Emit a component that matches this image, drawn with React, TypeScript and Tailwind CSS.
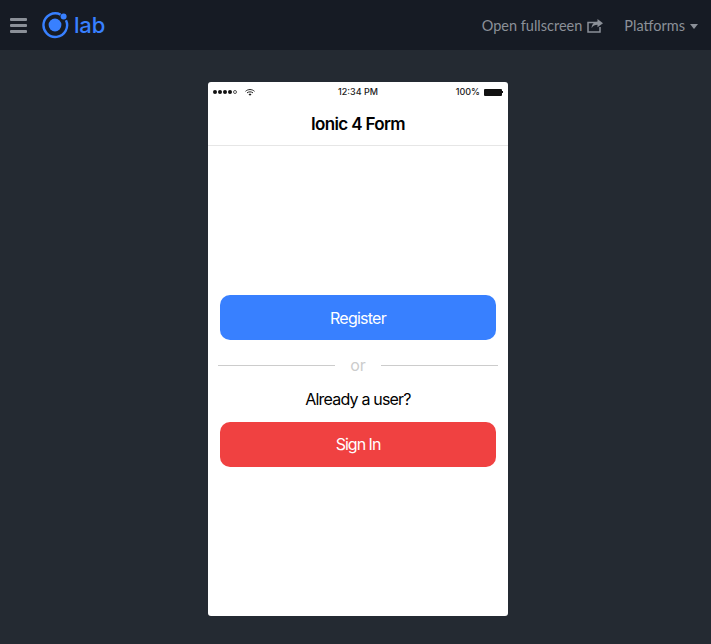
import React from "react";

function Logo() {
  return (
    <svg width="28" height="28" viewBox="0 0 28 28" fill="none">
      <circle cx="14" cy="14" r="6.4" fill="#3880ff" />
      <path d="M19.6 3.6A11.8 11.8 0 1 0 25 9.2" stroke="#3880ff" strokeWidth="2.4" strokeLinecap="butt" />
      <circle cx="22.6" cy="5.4" r="3" fill="#3880ff" />
    </svg>
  );
}

function ShareIcon() {
  return (
    <svg width="16" height="14" viewBox="0 0 16 14" fill="none">
      <path d="M9 3.5H1V13H13V8" stroke="#8b9098" strokeWidth="1.5" />
      <path d="M10.5 0L16 4.2L10.5 8.2V5.8C7.8 5.8 6 6.8 4.6 9.2C4.8 5.6 7 2.9 10.5 2.6Z" fill="#8b9098" />
    </svg>
  );
}

function Wifi() {
  return (
    <svg width="10" height="7" viewBox="0 0 10 7" fill="none">
      <path d="M0.5 2.3C3 0 7 0 9.5 2.3" stroke="#222" strokeWidth="1" />
      <path d="M2 3.9C3.7 2.5 6.3 2.5 8 3.9" stroke="#222" strokeWidth="1" />
      <path d="M3.5 5.2C4.4 4.6 5.6 4.6 6.5 5.2L5 6.8Z" fill="#222" />
    </svg>
  );
}

export default function App() {
  return (
    <div className="flex h-[644px] w-[711px] flex-col overflow-hidden bg-[#242a32] font-['Inter',sans-serif]">
      <header className="flex h-[50px] shrink-0 items-center justify-between bg-[#161b24] pl-[10px] pr-[13px]">
        <div className="flex items-center">
          <div className="flex w-[17px] flex-col gap-[3px]">
            <span className="h-[3px] rounded-[1px] bg-[#8b9098]" />
            <span className="h-[3px] rounded-[1px] bg-[#8b9098]" />
            <span className="h-[3px] rounded-[1px] bg-[#8b9098]" />
          </div>
          <div className="ml-[14px] flex items-center">
            <Logo />
          </div>
          <span className="ml-[5px] text-[22px] leading-none font-medium tracking-[-0.2px] text-[#3880ff]">lab</span>
        </div>
        <div className="flex items-center pt-[1px] font-['Lato',sans-serif] text-[14.5px] text-[#8b9098]">
          <span>Open fullscreen</span>
          <span className="ml-[5px] flex">
            <ShareIcon />
          </span>
          <span className="ml-[21px]">Platforms</span>
          <span className="ml-[5px] mt-[2px] h-0 w-0 border-x-[4.5px] border-t-[5px] border-x-transparent border-t-[#8b9098]" />
        </div>
      </header>
      <main className="flex flex-1 justify-center pt-[32px] pl-[5px]">
        <div className="flex h-[534px] w-[300px] flex-col overflow-hidden rounded-[3px] bg-white">
          <div className="relative flex h-[20px] shrink-0 items-center justify-between px-[5px] text-[9px] font-medium text-[#222]">
            <div className="flex items-center gap-[8px]">
              <div className="flex items-center gap-[1px]">
                <span className="h-[4px] w-[4px] rounded-full bg-[#111]" />
                <span className="h-[4px] w-[4px] rounded-full bg-[#111]" />
                <span className="h-[4px] w-[4px] rounded-full bg-[#111]" />
                <span className="h-[4px] w-[4px] rounded-full bg-[#111]" />
                <span className="h-[4px] w-[4px] rounded-full border-[0.5px] border-[#555]" />
              </div>
              <Wifi />
            </div>
            <span className="absolute left-[130px] top-[3px] leading-[14px]">12:34 PM</span>
            <div className="flex items-center gap-[4px]">
              <span>100%</span>
              <span className="h-[7px] w-[18px] rounded-[1px] bg-[#111]" />
              <span className="-ml-[4px] h-[2px] w-[1px] bg-[#111]" />
            </div>
          </div>
          <div className="flex h-[44px] shrink-0 items-center justify-center border-b border-[#e6e6e6] pt-[2px] text-[17px] font-semibold tracking-[-0.65px] text-black">
            Ionic 4 Form
          </div>
          <div className="flex flex-1 flex-col px-[12px] pt-[149px]">
            <button className="h-[45px] rounded-[10px] bg-[#3880ff] text-[16px] tracking-[-0.75px] text-white">Register</button>
            <div className="-mx-[2px] mt-[15px] flex h-[20px] items-center">
              <span className="h-px flex-1 bg-[#cccccc]" />
              <span className="w-[46px] text-center text-[16px] text-[#cccccc]">or</span>
              <span className="h-px flex-1 bg-[#cccccc]" />
            </div>
            <div className="mt-[14px] text-center text-[16px] leading-[20px] tracking-[-0.8px] text-black">Already a user?</div>
            <button className="mt-[13px] h-[45px] rounded-[10px] bg-[#f04141] pb-[2px] text-[16px] tracking-[-1px] text-white">Sign In</button>
          </div>
        </div>
      </main>
    </div>
  );
}
